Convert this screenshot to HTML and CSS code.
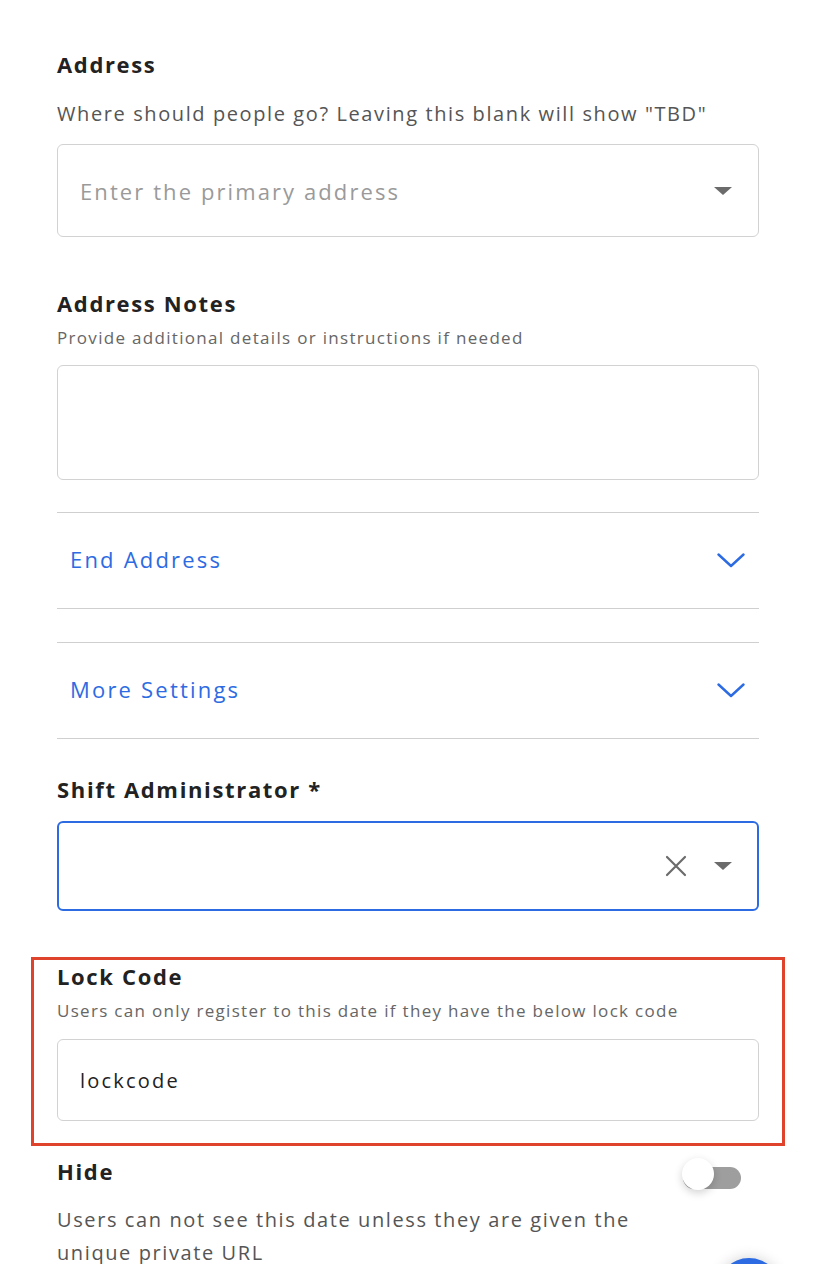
FILE: index.html
```html
<!DOCTYPE html>
<html>

<head>
    <title>Shift Settings</title>
    <link rel="stylesheet" href="styles.css">
</head>

<body>
    <div class="form">

        <h3 class="field-title first">Address</h3>
        <p class="hint">Where should people go? Leaving this blank will show "TBD"</p>
        <div class="select-box address-select">
            <span class="placeholder">Enter the primary address</span>
            <svg class="caret" width="18" height="8" viewBox="0 0 18 8"><polygon points="0,0 18,0 9,8" fill="#6b6b6b"/></svg>
        </div>

        <h3 class="field-title notes-title">Address Notes</h3>
        <p class="hint small">Provide additional details or instructions if needed</p>
        <div class="text-area"></div>

        <div class="collapse-row first-row">
            <span>End Address</span>
            <svg width="28" height="15" viewBox="0 0 28 15"><polyline points="1.5,1.5 14,13 26.5,1.5" fill="none" stroke="#2d6be2" stroke-width="2.4" stroke-linecap="round" stroke-linejoin="round"/></svg>
        </div>
        <div class="collapse-row">
            <span>More Settings</span>
            <svg width="28" height="15" viewBox="0 0 28 15"><polyline points="1.5,1.5 14,13 26.5,1.5" fill="none" stroke="#2d6be2" stroke-width="2.4" stroke-linecap="round" stroke-linejoin="round"/></svg>
        </div>

        <h3 class="field-title admin-title">Shift Administrator *</h3>
        <div class="select-box admin-select">
            <svg class="clear" width="22" height="22" viewBox="0 0 22 22"><path d="M2 2 L20 20 M20 2 L2 20" stroke="#6b6b6b" stroke-width="2.2" stroke-linecap="round"/></svg>
            <svg class="caret" width="18" height="8" viewBox="0 0 18 8"><polygon points="0,0 18,0 9,8" fill="#6b6b6b"/></svg>
        </div>

        <div class="highlight">
            <h3 class="field-title">Lock Code</h3>
            <p class="hint small">Users can only register to this date if they have the below lock code</p>
            <div class="text-input">lockcode</div>
        </div>

        <div class="toggle-row">
            <h3 class="field-title">Hide</h3>
            <div class="toggle">
                <div class="knob"></div>
            </div>
        </div>
        <p class="hint desc">Users can not see this date unless they are given the unique private URL</p>

    </div>

    <div class="fab"></div>
</body>

</html>
```

FILE: styles.css
```css
body {
    margin: 0;
    background: #ffffff;
    font-family: "Open Sans", "Noto Sans", sans-serif;
    letter-spacing: 0.1em;
    color: #222222;
    overflow: hidden;
    height: 1264px;
}

.form {
    width: 702px;
    padding: 50px 0 0 57px;
}

.field-title {
    margin: 0;
    font-size: 22px;
    line-height: 28px;
    font-weight: 700;
    letter-spacing: 0.075em;
    color: #222222;
}

.hint {
    margin: 23px 0 0 0;
    font-size: 20px;
    line-height: 26px;
    color: #555555;
}

.hint.small {
    margin-top: 10px;
    font-size: 17px;
    line-height: 22px;
    letter-spacing: 0.077em;
    color: #666666;
}

.select-box {
    box-sizing: border-box;
    display: flex;
    align-items: center;
    border: 1px solid #d2d2d2;
    border-radius: 6px;
    padding: 0 26px 0 22px;
}

.address-select {
    margin-top: 17px;
    height: 93px;
}

.placeholder {
    flex: 1;
    font-size: 22px;
    letter-spacing: 0.095em;
    color: #9a9a9a;
}

.caret {
    flex: none;
}

.notes-title {
    margin-top: 52px;
}

.text-area {
    box-sizing: border-box;
    margin-top: 16px;
    height: 115px;
    border: 1px solid #d2d2d2;
    border-radius: 6px;
}

.collapse-row {
    box-sizing: border-box;
    display: flex;
    align-items: center;
    justify-content: space-between;
    height: 97px;
    margin-top: 33px;
    padding: 0 14px 3px 13px;
    border-top: 1px solid #cfcfcf;
    border-bottom: 1px solid #cfcfcf;
    font-size: 22px;
    letter-spacing: 0.1em;
    color: #2d6be2;
}

.collapse-row svg {
    margin-top: 3px;
}

.collapse-row.first-row {
    margin-top: 32px;
}

.admin-title {
    margin-top: 36px;
}

.admin-select {
    margin-top: 18px;
    height: 90px;
    border: 2px solid #2d6be2;
    justify-content: flex-end;
    gap: 27px;
    padding-right: 25px;
}

.highlight {
    margin: 46px -26px 0 -26px;
    padding: 2px 23px 22px 23px;
    border: 3px solid #e0432c;
}

.text-input {
    box-sizing: border-box;
    margin-top: 17px;
    height: 82px;
    display: flex;
    align-items: center;
    padding-left: 22px;
    border: 1px solid #d2d2d2;
    border-radius: 6px;
    font-size: 20px;
    letter-spacing: 0.11em;
    color: #222222;
}

.toggle-row {
    display: flex;
    align-items: center;
    justify-content: space-between;
    margin-top: 7px;
}

.toggle {
    position: relative;
    width: 58px;
    height: 22px;
    margin: 14px 18px 0 0;
    border-radius: 11px;
    background: #9e9e9e;
}

.knob {
    position: absolute;
    left: -1px;
    top: -9px;
    width: 32px;
    height: 32px;
    border-radius: 50%;
    background: #ffffff;
    box-shadow: 0 3px 8px rgba(0, 0, 0, 0.18);
}

.hint.desc {
    margin-top: 14px;
    width: 630px;
    line-height: 33px;
}

.fab {
    position: absolute;
    left: 717px;
    top: 1258px;
    width: 64px;
    height: 64px;
    border-radius: 50%;
    background: #2d6be2;
    box-shadow: 0 0 14px rgba(0, 0, 0, 0.18);
}
```
